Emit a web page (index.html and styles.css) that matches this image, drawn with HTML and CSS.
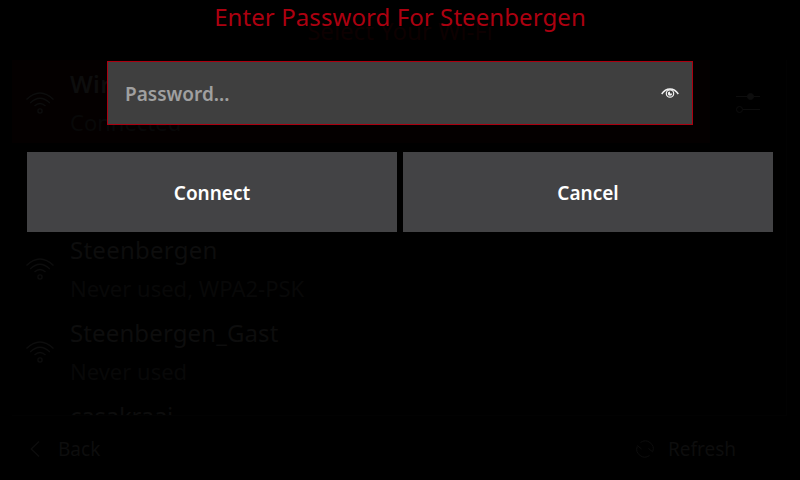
FILE: index.html
```
<!DOCTYPE html>
<html lang="en">
<head>
<meta charset="utf-8">
<title>Wi-Fi</title>
<link rel="stylesheet" href="styles.css">
</head>
<body>
<svg class="defs" width="0" height="0" aria-hidden="true">
  <symbol id="wifi" viewBox="0 0 30 24">
    <g fill="none" stroke="currentColor" stroke-width="1.3">
      <path d="M1.5 8.500Q15-4.500 28.500 8.500M5.200 12Q15 2.500 24.800 12M9.500 15Q15 10 20.500 15"/>
      <circle cx="15" cy="20" r="2.100"/>
    </g>
  </symbol>
</svg>
<main class="screen">
  <h1 class="heading">Select Your Wi-Fi</h1>
  <section class="list">
    <div class="row active">
      <div class="network">
        <svg class="wifi"><use href="#wifi"/></svg>
        <div><div class="name bold">Wir</div><div class="status">Connected</div></div>
      </div>
      <div class="settings">
        <svg width="26" height="22" viewBox="0 0 26 22" fill="none" stroke="currentColor"><path d="M1 4.500h24M8 17.500h17"/><circle cx="15.500" cy="4.500" r="3" fill="currentColor"/><circle cx="4.500" cy="17.500" r="3"/></svg>
      </div>
    </div>
    <div class="row"></div>
    <div class="row">
      <div class="network">
        <svg class="wifi"><use href="#wifi"/></svg>
        <div><div class="name">Steenbergen</div><div class="status">Never used, WPA2-PSK</div></div>
      </div>
    </div>
    <div class="row">
      <div class="network">
        <svg class="wifi"><use href="#wifi"/></svg>
        <div><div class="name gast">Steenbergen_Gast</div><div class="status">Never used</div></div>
      </div>
    </div>
    <div class="row">
      <div class="network">
        <div class="wifi"></div>
        <div><div class="name tight">casakraai</div></div>
      </div>
    </div>
  </section>
  <footer class="footer">
    <div class="action">
      <svg class="back" width="10" height="16" viewBox="0 0 10 16" fill="none" stroke="currentColor" stroke-width="1.200"><path d="M9 .5L1.200 8L9 15.500"/></svg>
      <span>Back</span>
    </div>
    <div class="action">
      <svg class="refresh" width="18" height="18" viewBox="0 0 18 18" fill="none" stroke="currentColor"><path d="M4.500 2.500A8 8 0 0 1 16.800 11.500M13.500 15.500A8 8 0 0 1 1.200 6.500M12.500 8.500L16.800 12M1.200 5.500L5.500 9"/></svg>
      <span>Refresh</span>
    </div>
  </footer>
</main>
<section class="dialog">
  <h2 class="title">Enter Password For Steenbergen</h2>
  <div class="field">
    <span>Password...</span>
    <svg width="18" height="12" viewBox="0 0 18 12" fill="none" stroke="#f2f2f2"><path d="M.7 6Q4 1 9 1T17.300 6" stroke-width="1.400"/><circle cx="9" cy="5.500" r="3.700" stroke-width="1.200"/><path d="M9 3.400A2.200 2.200 0 1 0 11.200 5.600H9z" fill="#f2f2f2" stroke="none"/></svg>
  </div>
  <div class="buttons">
    <button>Connect</button>
    <button>Cancel</button>
  </div>
</section>
</body>
</html>
```
FILE: styles.css
```
* { box-sizing: border-box; }

body {
  margin: 0;
  width: 800px;
  height: 480px;
  overflow: hidden;
  position: relative;
  background: #000;
  font-family: "Noto Sans", sans-serif;
}

.defs { display: block; }

.screen {
  height: 480px;
  display: flex;
  flex-direction: column;
  color: #0d0d0d;
}

.heading {
  margin: 0;
  height: 60px;
  flex: none;
  padding-top: 14px;
  text-align: center;
  font-size: 24px;
  font-weight: 400;
  line-height: 34px;
  color: #0d0001;
}

.list {
  height: 356px;
  flex: none;
  margin: 0 13px 0 12px;
  overflow: hidden;
  border-right: 1px solid #020202;
  border-bottom: 1px solid #020202;
}

.row { height: 83px; display: flex; }

.network {
  width: 698px;
  display: flex;
  gap: 15px;
  padding-left: 13px;
}

.active .network { background: #040000; }

.wifi { width: 30px; height: 24px; margin-top: 31px; flex: none; }

.name {
  font-size: 24px;
  line-height: 34px;
  letter-spacing: .25px;
  margin-top: 7px;
  white-space: nowrap;
}
.bold { font-weight: 600; }
.gast { letter-spacing: .12px; }
.tight { letter-spacing: -.25px; }
.status { font-size: 22px; line-height: 30px; margin-top: 6px; color: #080808; }

.settings {
  flex: 1;
  display: flex;
  justify-content: center;
  padding-top: 32px;
}

.footer {
  height: 64px;
  flex: none;
  display: flex;
  justify-content: space-between;
  padding: 0 64px 0 30px;
  font-size: 19px;
  line-height: 26px;
}

.action { display: flex; align-items: center; height: 66px; }
.back { margin-right: 18px; }
.refresh { margin-right: 14px; }

.dialog {
  position: absolute;
  inset: 0;
  display: flex;
  flex-direction: column;
  align-items: center;
}

.title {
  margin: 0;
  height: 61px;
  font-size: 24px;
  font-weight: 400;
  line-height: 34px;
  letter-spacing: .08px;
  color: #ac0010;
}

.field {
  width: 586px;
  height: 64px;
  padding: 2px 13px 0 17px;
  display: flex;
  align-items: center;
  justify-content: space-between;
  border: 1px solid #ac0010;
  background: #3f3f3f;
  color: #a0a0a0;
  font-size: 19px;
  font-weight: 600;
  line-height: 26px;
}

.buttons { display: flex; gap: 6px; margin-top: 27px; }

button {
  width: 370px;
  height: 80px;
  padding: 2px 0 0;
  border: 0;
  background: #434345;
  color: #fff;
  font: 600 19px/26px "Noto Sans", sans-serif;
}
```
